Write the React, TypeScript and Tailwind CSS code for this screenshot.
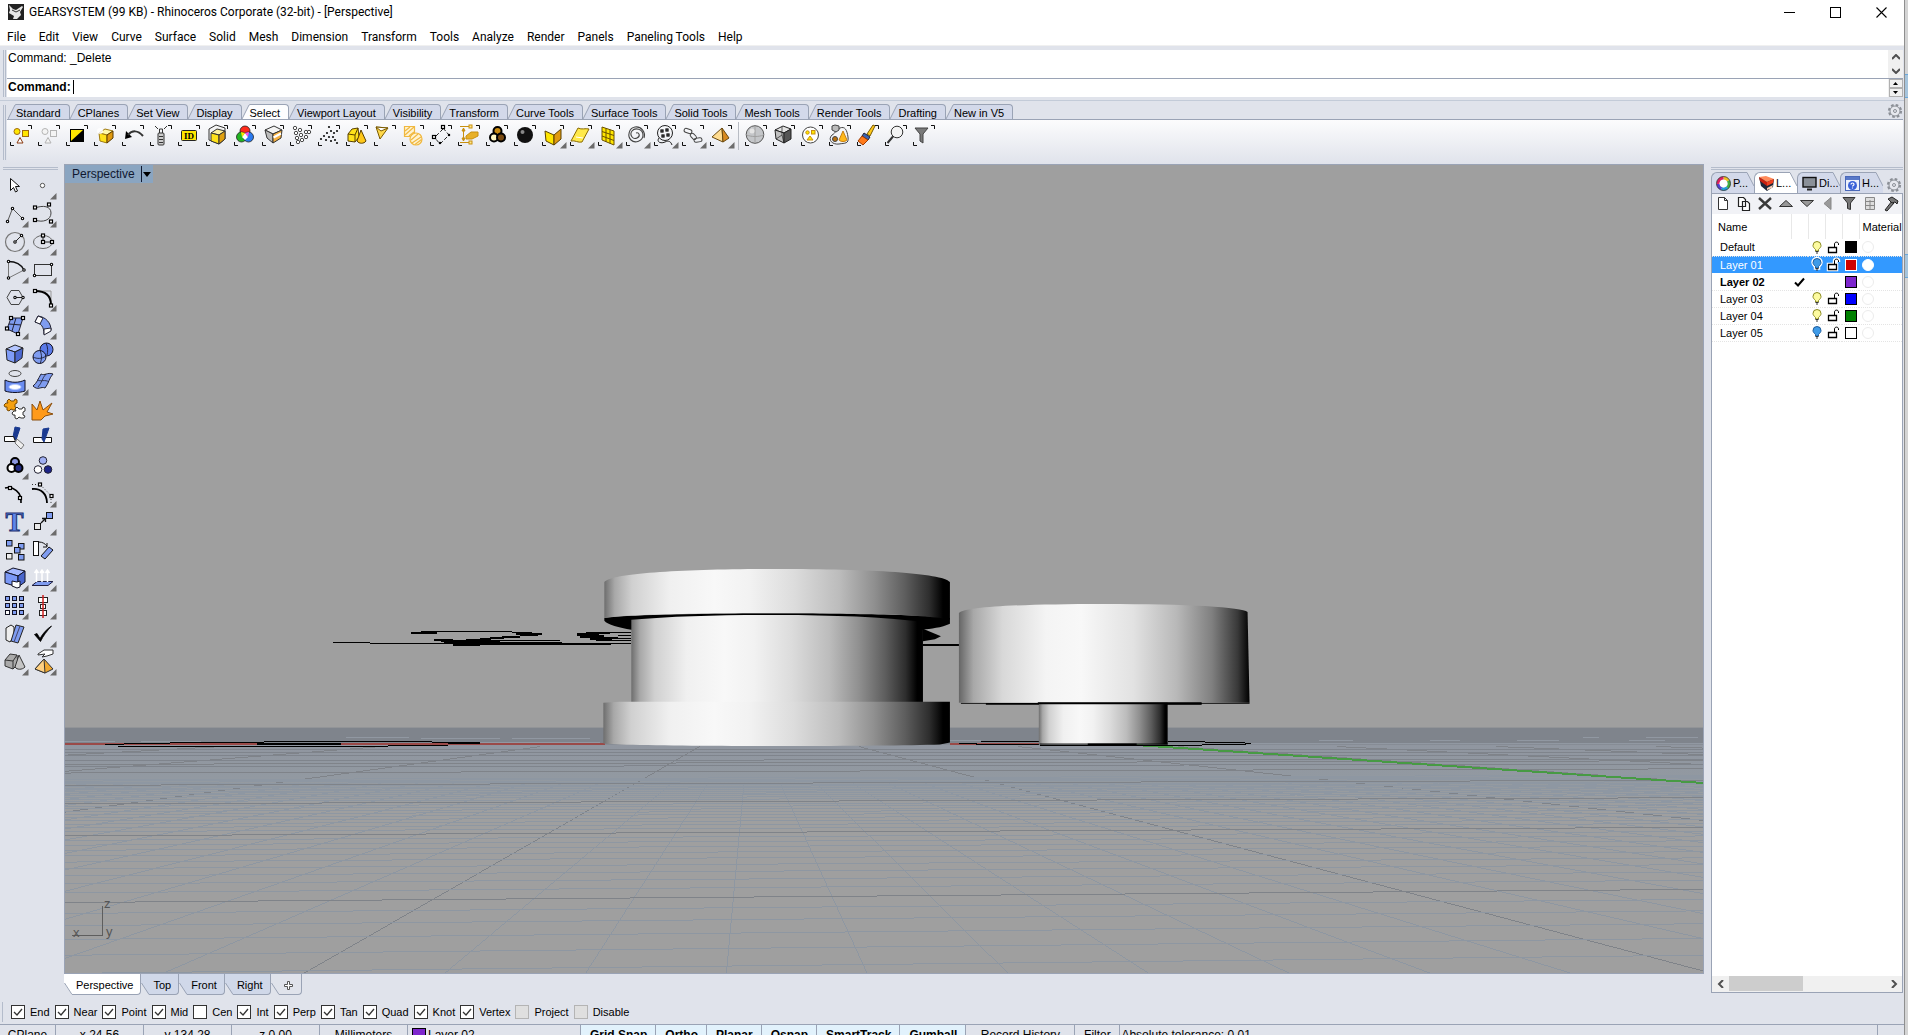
import { Fragment, useState, type ReactNode } from "react";

/* ---------- shared bits ---------- */

const SANS = "font-['Liberation_Sans',Arial,sans-serif]";
const UI = "font-[Roboto,'Noto_Sans',sans-serif]";

function Handle({ x, y, s = 3 }: { x: number; y: number; s?: number }) {
  return <rect x={x - s / 2} y={y - s / 2} width={s} height={s} fill="#fff" stroke="#000" strokeWidth="1.2" />;
}

function Dot({ x, y }: { x: number; y: number }) {
  return <circle cx={x} cy={y} r="1.2" fill="#fff" stroke="#000" strokeWidth="1.1" />;
}

interface CubeProps {
  top: string;
  left: string;
  right: string;
}

function Cube({ top, left, right }: CubeProps) {
  return (
    <g stroke="#222" strokeWidth="1" strokeLinejoin="round">
      <path d="M5 9l9-4 8 3-8 4z" fill={top} />
      <path d="M5 9l9 3v11l-8-3z" fill={left} />
      <path d="M14 12l8-4-1 10-7 5z" fill={right} />
    </g>
  );
}

/* ---------- select toolbar ---------- */

interface Tool {
  name: string;
  art: ReactNode;
  flyout?: boolean;
}

const selectTools: Tool[] = [
  {
    name: "Select all",
    art: (
      <g stroke="#a06a10" strokeWidth="1">
        <circle cx="9" cy="9.5" r="3" fill="#ffe600" />
        <rect x="14.500" y="8.500" width="6" height="6" fill="#ffe600" />
        <path d="M12 15.500l3 5.500H9z" fill="#fff" stroke="#8a3a10" />
      </g>
    ),
  },
  {
    name: "Select none",
    art: (
      <g stroke="#b4b4b4" strokeWidth="1" fill="#f4f4f4">
        <circle cx="9" cy="9.500" r="3" />
        <rect x="14.500" y="8.500" width="6" height="6" />
        <path d="M12 15.500l3 5.500H9z" />
      </g>
    ),
  },
  {
    name: "Invert selection",
    art: (
      <g>
        <rect x="6" y="7" width="14" height="13" fill="#000" />
        <path d="M7 8h12L7 19z" fill="#ffe600" />
      </g>
    ),
  },
  {
    name: "Select last created",
    art: (
      <g stroke="#a07a10" strokeWidth="1" strokeLinejoin="round">
        <path d="M7 11l6-4 8 2-6 4z" fill="#fff9a8" />
        <path d="M7 11l8 2v8l-7-2z" fill="#ffe21a" />
        <path d="M15 13l6-4v7l-6 5z" fill="#e09a10" stroke="#5a3a00" />
        <circle cx="8" cy="9" r="3" fill="#fff" stroke="none" opacity=".8" />
      </g>
    ),
  },
  {
    name: "Select previous",
    art: (
      <g>
        <path d="M5 17l1-8 6 6z" fill="#000" />
        <path d="M8 13c4-5 10-5 15 1" fill="none" stroke="#333" strokeWidth="2" />
      </g>
    ),
  },
  {
    name: "Select dup",
    art: (
      <g stroke="#333" fill="none">
        <rect x="10" y="11" width="6" height="12" fill="#ccc" rx="1" />
        <path d="M11.500 11V7h3v4M7 4l3 3M19 4l-3 3M11 14.500h4M11 17.500h4M11 20.500h4" />
      </g>
    ),
  },
  {
    name: "Select by ID",
    art: (
      <g>
        <rect x="5.500" y="8.500" width="15" height="10" fill="#ffe600" stroke="#222" rx="1" />
        <text x="13" y="17" textAnchor="middle" fontSize="9" fontWeight="bold" fontFamily="Liberation Serif, serif">
          ID
        </text>
      </g>
    ),
  },
  {
    name: "Select by layer",
    art: (
      <g stroke="#333" strokeLinejoin="round">
        <path d="M5 7l7-4 9 3v11l-6 5-10-4z" fill="#f4f4f4" />
        <path d="M7 11l6-4 8 2-6 4z" fill="#fff29a" />
        <path d="M7 11l8 2v9l-8-3z" fill="#ffe21a" />
        <path d="M15 13l6-4v8l-6 5z" fill="#e0a010" />
      </g>
    ),
  },
  {
    name: "Select by color",
    art: (
      <g stroke="#222" strokeWidth=".8">
        <circle cx="13" cy="9" r="5" fill="#ff2a1a" />
        <circle cx="9.500" cy="15" r="5" fill="#22b422" />
        <circle cx="16.500" cy="15" r="5" fill="#2a7af0" />
        <path d="M13 11l3 4-3 3-3-3z" fill="#fff" stroke="none" />
        <path d="M13 11l-4-1 1 5z" fill="#ffe600" stroke="none" />
        <path d="M13 11l4-1-1 5z" fill="#ff50e0" stroke="none" />
      </g>
    ),
  },
  {
    name: "Select by material",
    art: (
      <g stroke="#333" strokeLinejoin="round">
        <path d="M5 8l9-4 8 4-9 4z" fill="#f4f4f4" />
        <path d="M5 8l8 4v9l-6-5z" fill="#bbb" />
        <path d="M13 12l9-4-1 8-8 5z" fill="#f5b040" />
        <path d="M13.500 15.500l7.500-4" stroke="#fff" strokeWidth="2" />
      </g>
    ),
  },
  {
    name: "Select point clouds",
    art: (
      <g stroke="#333" strokeWidth=".9" fill="#fff">
        {[[7, 6], [12, 8], [8, 11], [13, 13], [18, 10], [9, 16], [14, 18], [18, 15], [10, 20], [21, 10]].map(([x, y]) => (
          <circle key={`${x}-${y}`} cx={x} cy={y} r="1.700" />
        ))}
      </g>
    ),
  },
  {
    name: "Select points",
    art: (
      <g fill="#111">
        {[[13, 5], [15, 9], [11, 11], [18, 11], [21, 9], [8, 14], [13, 15], [17, 15], [5, 17], [10, 18], [15, 19], [19, 18], [21, 21]].map(
          ([x, y]) => (
            <circle key={`${x}-${y}`} cx={x} cy={y} r="1.100" />
          )
        )}
      </g>
    ),
  },
  {
    name: "Select polysurfaces",
    art: (
      <g stroke="#5a4000" strokeLinejoin="round">
        <path d="M4 12l4-5 6-1 1 9-4 5-7-1z" fill="#ffe21a" />
        <path d="M4 12l7 1v7M11 13l3-7" fill="none" />
        <path d="M17 8l5 11c-2 3-7 3-9 0z" fill="#ffc81a" />
      </g>
    ),
  },
  {
    name: "Select surfaces",
    art: (
      <g stroke="#7a5a00" strokeLinejoin="round">
        <path d="M4 5l12 1-8 11z" fill="#ffd84a" />
        <path d="M4 5l12 1-7 3z" fill="#fff" />
      </g>
    ),
  },
  {
    name: "Select hatches",
    art: (
      <g stroke="#f0b840" strokeWidth="1.200" fill="none">
        <path d="M4.500 4.500h10v8l-3 2h-7z" fill="#fff3d0" />
        <circle cx="16" cy="17" r="6" fill="#fff3d0" />
        <path d="M5 9l5-4M5 13l9-8M9 14l5-4M11 18l7-6M12 21l9-6M15 22.500l6.500-5" />
      </g>
    ),
  },
  {
    name: "Select curves",
    art: (
      <g stroke="#222" fill="none">
        <path d="M8 14l8-8M15 6l6 7-9 9-5-6" strokeDasharray="4 2" />
        <Handle x={15} y={5} />
        <Handle x={6} y={15} />
        <Handle x={21} y={13} s={1} />
        <Handle x={12} y={21} s={1} />
      </g>
    ),
  },
  {
    name: "Select dimensions",
    art: (
      <g stroke="#c89010" fill="#ffe88a">
        <path d="M4 4.500h11M4 20.500h11M7.500 6v13" fill="none" />
        <path d="M7.500 6l-1.500 3h3zM7.500 19l-1.500-3h3z" fill="#c89010" />
        <path d="M10 14l5-4h7v4l-6 3h-6z" fill="#e8b028" />
        <rect x="13" y="3" width="3" height="3" />
        <rect x="13" y="19" width="3" height="3" />
      </g>
    ),
  },
  {
    name: "Select groups",
    art: (
      <g stroke="#000" strokeWidth="2">
        <circle cx="13.500" cy="9" r="4" fill="#c88a10" />
        <circle cx="10" cy="15.500" r="4" fill="#fff6c0" />
        <circle cx="17" cy="15.500" r="4" fill="#7a4a10" />
      </g>
    ),
  },
  {
    name: "Select block instances",
    art: (
      <g>
        <circle cx="13" cy="13" r="8" fill="#111" />
        <circle cx="10.500" cy="10" r="2" fill="#888" />
      </g>
    ),
  },
  {
    name: "Select open polysurfaces",
    flyout: true,
    art: (
      <g stroke="#5a4000" strokeLinejoin="round">
        <path d="M5 9l9 4v10l-8-4z" fill="#ffe600" />
        <path d="M14 13l7-6v10l-7 6z" fill="#e09a10" />
      </g>
    ),
  },
  {
    name: "Select planar",
    flyout: true,
    art: (
      <g stroke="#8a6a00" strokeLinejoin="round">
        <path d="M3 19l7-13c4 2 7 0 11 1l-7 13c-4 1-7-2-11-1z" fill="#ffe94a" />
        <path d="M8 15l7 1" stroke="#fff" />
      </g>
    ),
  },
  {
    name: "Select meshes",
    flyout: true,
    art: (
      <g stroke="#6a5000" strokeLinejoin="round">
        <path d="M6 5l12 4v14L6 18z" fill="#ffe600" />
        <path d="M10 6v14M14 7.500v14M6 9.500l12 4M6 14l12 4.500" fill="none" />
      </g>
    ),
  },
  {
    name: "Select chain",
    flyout: true,
    art: (
      <path
        d="M20 16c2-6-3-12-9-11s-8 9-4 13 12 1 12-5-8-8-11-4 1 9 5 7 2-6-1-5"
        fill="none"
        stroke="#444"
        strokeWidth="1.100"
      />
    ),
  },
  {
    name: "Select lasso",
    flyout: true,
    art: (
      <g stroke="#222" fill="none">
        <circle cx="13" cy="11" r="7.500" />
        <path d="M7 16c-3 4 2 6 6 4s6 0 7 3" />
        <Handle x={10} y={9} s={2} />
        <Handle x={15} y={8} s={2} />
        <Handle x={11} y={14} s={2} />
        <Handle x={16} y={13} s={2} />
      </g>
    ),
  },
  {
    name: "Select linked",
    flyout: true,
    art: (
      <g stroke="#444" fill="none">
        <rect x="4" y="7" width="8" height="4" rx="2" transform="rotate(20 8 9)" />
        <rect x="10" y="12" width="7" height="4" rx="2" transform="rotate(45 13 14)" />
        <rect x="14" y="16" width="8" height="4" rx="2" transform="rotate(-10 18 18)" />
      </g>
    ),
  },
  {
    name: "Select by boundary",
    flyout: true,
    art: (
      <g stroke="#6a4a10" strokeLinejoin="round">
        <path d="M4 15l10-9 1 14z" fill="#ffdc90" />
        <path d="M14 6l7 10-6 4z" fill="#d88a20" />
      </g>
    ),
  },
];

const filterTools: Tool[] = [
  {
    name: "Select spheres",
    art: (
      <g stroke="#555" fill="none">
        <circle cx="12" cy="12.500" r="8.800" fill="#c4c6c9" />
        <path d="M12 4v17M3.500 13c5 2 12 2 17 0" stroke="#a0a0a0" />
        <circle cx="9" cy="9" r="2.500" fill="#e4e4e4" stroke="none" />
      </g>
    ),
  },
  {
    name: "Select boxes",
    art: (
      <g stroke="#222" strokeLinejoin="round">
        <path d="M4 8l8-4 8 3-7 4z" fill="#e4e4e4" />
        <path d="M4 8l9 3v10l-8-4z" fill="#c0c0c0" />
        <path d="M13 11l7-4v10l-7 4z" fill="#555" />
        <path d="M5 17l6-4 2 8M11 5v8" fill="none" strokeWidth=".7" />
      </g>
    ),
  },
  {
    name: "Select by value",
    art: (
      <g stroke="#c89010" fill="#ffe600">
        <circle cx="11.500" cy="13" r="8" fill="#fff" stroke="#444" />
        <circle cx="8.500" cy="10.500" r="1.700" />
        <rect x="12.500" y="8.500" width="3.500" height="3.500" />
        <path d="M11 14l3 4H8z" />
      </g>
    ),
  },
  {
    name: "Select similar",
    art: (
      <g stroke="#444" fill="none">
        <path d="M5 13c-5 5 1 10 7 9s10 0 9-7-3-11-8-9-4 5-8 7z" />
        <path d="M5 4l3-1 4 1v4l-3 2-4-2z" fill="#bbb" />
        <circle cx="8" cy="17" r="2.500" fill="#b87010" />
        <path d="M16 9l4 9c-2 2-6 2-8 0z" fill="#ffb81a" stroke="#c88010" />
      </g>
    ),
  },
  {
    name: "Selection brush",
    art: (
      <g strokeLinejoin="round">
        <path d="M12 12l6-9 2 1-5 10z" fill="#ffc81a" stroke="#7a5a00" />
        <path d="M9 11l6 4-2 3-6-4z" fill="#3a62b0" stroke="#223" />
        <path d="M7 14l6 4-5 5-5-4z" fill="#ff7a1a" stroke="#a03a00" />
      </g>
    ),
  },
  {
    name: "Zoom selected",
    art: (
      <g stroke="#333">
        <circle cx="14" cy="10" r="5.800" fill="#f4f4f4" />
        <path d="M10 14.500L4.500 21" strokeWidth="2" />
      </g>
    ),
  },
  {
    name: "Selection filter",
    art: <path d="M4 6h13l-5 6v9l-3-2v-7z" fill="#7a7a7a" stroke="#444" />,
  },
];

function SelectTool({ tool }: { tool: Tool }) {
  return (
    <button type="button" aria-label={tool.name} className="h-7 w-7 shrink-0">
      <svg viewBox="0 0 28 28" className="h-7 w-7">
        {tool.art}
        <path d="M2.500 20v3.500H6M20 3.500h3.500V7" fill="none" stroke="#111" />
        {tool.flyout && <path d="M20 26.500h6.500V20z" fill="#6c6c6c" />}
      </svg>
    </button>
  );
}

/* ---------- left tools ---------- */

const BLUE = "#7f9cf0";

const sideTools: Tool[] = [
  {
    name: "Select",
    flyout: false,
    art: <path d="M9.500 6.500v12l3-3 2 4.500 2-1-2-4.500h4z" fill="#fff" stroke="#111" strokeLinejoin="round" />,
  },
  { name: "Point", flyout: true, art: <circle cx="13.500" cy="13.500" r="2.200" fill="#fff" stroke="#555" /> },
  {
    name: "Polyline",
    flyout: true,
    art: (
      <g>
        <path d="M6.500 21.500l5-13 10 10" fill="none" stroke="#555" />
        <Dot x={6.5} y={21.5} />
        <Dot x={11.5} y={8.5} />
        <Dot x={21.5} y={18.5} />
      </g>
    ),
  },
  {
    name: "Curve",
    flyout: true,
    art: (
      <g>
        <path d="M6 8c8-3 16-2 16 5s-8 10-16 7" fill="none" stroke="#444" />
        <Handle x={6} y={7.5} />
        <Handle x={20} y={4.5} />
        <Handle x={6} y={20} />
        <Handle x={22} y={21.5} />
      </g>
    ),
  },
  {
    name: "Circle",
    flyout: true,
    art: (
      <g>
        <circle cx="14" cy="14" r="9.500" fill="none" stroke="#777" strokeWidth="1.200" />
        <path d="M14 14l6-6" stroke="#222" />
        <Dot x={14} y={14} />
        <Dot x={20.5} y={7.5} />
      </g>
    ),
  },
  {
    name: "Ellipse",
    flyout: true,
    art: (
      <g>
        <ellipse cx="14" cy="14" rx="9.500" ry="6.500" fill="none" stroke="#666" />
        <path d="M14 8v6h9" fill="none" stroke="#222" />
        <Handle x={14} y={7.5} />
        <Handle x={14} y={14} />
        <Handle x={23} y={14} />
      </g>
    ),
  },
  {
    name: "Arc",
    flyout: true,
    art: (
      <g>
        <path d="M7.500 22V5.500M7.500 22L23 14" stroke="#777" />
        <path d="M7.500 5.500C14 5.500 20 8 23 14" fill="none" stroke="#111" strokeWidth="1.300" />
        <Dot x={7.5} y={5.5} />
        <Dot x={23} y={14} />
        <Dot x={7.5} y={22} />
      </g>
    ),
  },
  {
    name: "Rectangle",
    flyout: true,
    art: (
      <g>
        <rect x="5.500" y="8.500" width="17" height="11" fill="none" stroke="#333" />
        <Dot x={22.5} y={8.5} />
        <Dot x={5.5} y={19.5} />
      </g>
    ),
  },
  {
    name: "Polygon",
    flyout: true,
    art: (
      <g>
        <path d="M10 6.500h8l4 7-4 7h-8l-4-7z" fill="none" stroke="#444" />
        <path d="M14 13.500h8" stroke="#222" />
        <Dot x={14} y={13.5} />
        <Dot x={22} y={13.5} />
      </g>
    ),
  },
  {
    name: "Fillet",
    flyout: true,
    art: (
      <g>
        <path d="M6 7h16v15" fill="none" stroke="#999" />
        <path d="M6 7c10 0 16 4 16 14" fill="none" stroke="#000" strokeWidth="2" />
        <Handle x={6} y={7} />
        <Handle x={22} y={21.5} />
      </g>
    ),
  },
  {
    name: "Surface from corners",
    flyout: true,
    art: (
      <g>
        <path d="M10 6h12l-5 16-11-5z" fill={BLUE} stroke="#223" />
        <path d="M15 6l-4 13M8 12l12 1" stroke="#223" fill="none" />
        <Handle x={10} y={6} />
        <Handle x={22} y={6} />
        <Handle x={6} y={16.5} />
        <Handle x={17} y={22} />
      </g>
    ),
  },
  {
    name: "Sweep",
    flyout: true,
    art: (
      <g stroke="#223" strokeLinejoin="round">
        <path d="M9 4c8 1 13 7 13 14l-7 4c0-7-3-11-9-12z" fill={BLUE} />
        <path d="M9 4l5 2-3 6-5-2zM15 17l7-1v3l-7 4z" fill="#fff" />
      </g>
    ),
  },
  { name: "Box", flyout: true, art: <Cube top="#b4c6ff" left="#7f9cf8" right="#4c68d0" /> },
  {
    name: "Sphere",
    flyout: true,
    art: (
      <g stroke="#112">
        <circle cx="17.500" cy="9.500" r="6.500" fill="#5a7ae8" />
        <circle cx="10.500" cy="17" r="6.500" fill={BLUE} />
        <path d="M4 17c4 2 9 2 13-1M11 10.500c2 4 2 9 0 13M17 3c2 4 2 9 1 12" fill="none" strokeWidth=".8" />
      </g>
    ),
  },
  {
    name: "Boundary",
    flyout: true,
    art: (
      <g stroke="#112">
        <ellipse cx="14" cy="5.500" rx="6" ry="3" fill="none" stroke="#444" />
        <path d="M4 12c6 3 14 3 20 0v11c-6 2-14 2-20 0z" fill="#6a8cf0" />
        <ellipse cx="14" cy="19" rx="6" ry="2.500" fill="#fff" stroke="#b8ccff" />
      </g>
    ),
  },
  {
    name: "Patch",
    flyout: true,
    art: (
      <g stroke="#223" strokeLinejoin="round" fill="none">
        <path d="M4 18c4-3 5-7 8-12 4 2 6-2 12 0-4 4-4 9-8 14-4-2-7 3-12-2z" fill={BLUE} />
        <path d="M8 12c4 2 8-1 12 2M17 6c-4 4-4 9-8 13" strokeWidth=".8" />
      </g>
    ),
  },
  {
    name: "Explode plugin",
    art: (
      <g strokeLinejoin="round">
        <path
          d="M6 5l2-2 2 2h3l1-2 2 1v3l-2 1v3l2 1-1 2h-3l-2-1-2 2-2-1v-3H4l-1-2 2-2h2z"
          fill="#f4a010"
          stroke="#7a4a00"
        />
        <path
          d="M14 13l2-2 2 2h3l1-2 2 1v3l-2 1v3l2 1-1 2h-3l-2-1-2 2-2-1v-3h-2l-1-2 2-2h2z"
          fill="#fff"
          stroke="#333"
        />
      </g>
    ),
  },
  {
    name: "Explode",
    art: <path d="M3 24V8l5 6 3-9 3 9 9-7-5 9 6 2-8 2-4 4z" fill="#ff9a1a" stroke="#8a5010" />,
  },
  {
    name: "Trim",
    art: (
      <g stroke="#111">
        <path d="M14 3l5 1-4 12-3-3z" fill="#1a3a90" stroke="#1a3a90" />
        <path d="M3.500 12.500h9l2 5h-11z" fill="#fff" />
        <path d="M16 15l7 6-3 4-6-6z" fill="#eee" stroke="#777" />
      </g>
    ),
  },
  {
    name: "Split",
    art: (
      <g stroke="#111">
        <path d="M4.500 13.500h18v5h-18z" fill="#fff" />
        <path d="M14 5l6-1-5 14-2-3z" fill="#1a3a90" stroke="#1a3a90" />
      </g>
    ),
  },
  {
    name: "Group",
    flyout: true,
    art: (
      <g stroke="#000" strokeWidth="2">
        <circle cx="14" cy="10" r="4" fill="#8a96e0" />
        <circle cx="10.500" cy="16" r="4" fill="#fff" />
        <circle cx="17.500" cy="16" r="4" fill="#222a80" />
      </g>
    ),
  },
  {
    name: "Ungroup",
    art: (
      <g stroke="#223">
        <circle cx="14" cy="8.500" r="3.800" fill="#a0b0f4" />
        <circle cx="9" cy="17.500" r="3.800" fill="#fff" />
        <circle cx="19" cy="17.500" r="3.800" fill="#1c2488" />
      </g>
    ),
  },
  {
    name: "Control points",
    art: (
      <g>
        <path d="M4 8c8-2 17 4 16 15" fill="none" stroke="#000" strokeWidth="1.600" />
        <Handle x={9} y={8} />
        <Handle x={19} y={18} />
      </g>
    ),
  },
  {
    name: "Edit points",
    flyout: true,
    art: (
      <g>
        <path d="M3 9c9-1 15 5 15 14" fill="none" stroke="#000" strokeWidth="1.800" />
        <path d="M3 4.500h8l11 11v8" fill="none" stroke="#333" strokeDasharray="1 2" />
        <Handle x={11} y={4.5} />
        <Handle x={22.5} y={16} />
      </g>
    ),
  },
  {
    name: "Text",
    flyout: true,
    art: (
      <text
        x="13.500"
        y="23"
        textAnchor="middle"
        fontSize="27"
        fontWeight="bold"
        fontFamily="Liberation Serif, serif"
        fill="#5f86ea"
        stroke="#1c3070"
        strokeWidth="1"
      >
        T
      </text>
    ),
  },
  {
    name: "Move",
    flyout: true,
    art: (
      <g stroke="#111">
        <rect x="5.500" y="15.500" width="6" height="6" fill="#e8e8e8" />
        <rect x="17.500" y="4.500" width="6" height="6" fill={BLUE} />
        <path d="M12 15l4-4M13 10.500h3.500V14" fill="none" strokeWidth="1.300" />
      </g>
    ),
  },
  {
    name: "Copy",
    art: (
      <g stroke="#111">
        <rect x="5.500" y="4.500" width="5.500" height="5.500" fill={BLUE} />
        <rect x="17.500" y="7.500" width="5.500" height="5.500" fill={BLUE} />
        <rect x="13.500" y="11.500" width="5.500" height="5.500" fill={BLUE} />
        <rect x="5.500" y="17.500" width="5.500" height="5.500" fill="#eee" />
        <rect x="17.500" y="18.500" width="5.500" height="5.500" fill={BLUE} />
      </g>
    ),
  },
  {
    name: "Rotate",
    art: (
      <g stroke="#111">
        <rect x="4.500" y="5.500" width="5" height="14" fill="#fff" />
        <path d="M12 20l8-9 4 3-8 9z" fill={BLUE} />
        <path d="M10 6c4 0 6 2 8 4M18 7v4h-4" fill="none" />
      </g>
    ),
  },
  {
    name: "Boolean",
    flyout: true,
    art: (
      <g stroke="#112" strokeLinejoin="round">
        <path d="M4 8l8-4 12 3-7 5z" fill="#a4b8ff" />
        <path d="M4 8l13 4v11L4 19z" fill="#7a98f6" />
        <path d="M17 12l7-5v11l-7 5z" fill="#4a66cc" />
        <path d="M11 17l5 1 3-1v6l-3 1-5-2z" fill="#fff" />
      </g>
    ),
  },
  {
    name: "Extrude",
    flyout: true,
    art: (
      <g>
        <path d="M3 21.500l5-4h16l-5 4z" fill={BLUE} stroke="#224" />
        <path
          d="M7.500 18V7M13 18V7M18.500 18V7M5.500 9l2-3 2 3M11 9l2-3 2 3M16.500 9l2-3 2 3"
          stroke="#fff"
          strokeWidth="1.500"
          fill="none"
        />
      </g>
    ),
  },
  {
    name: "Array",
    flyout: true,
    art: (
      <g stroke="#112" fill={BLUE}>
        {[0, 1, 2].map((r) => (
          <Fragment key={r}>
            <rect x="4.500" y={4.5 + r * 7} width="4" height="4" fill={r === 2 ? "#fff" : BLUE} />
            <rect x="11.500" y={4.5 + r * 7} width="4" height="4" />
            <rect x="18.500" y={4.5 + r * 7} width="4" height="4" />
          </Fragment>
        ))}
      </g>
    ),
  },
  {
    name: "Align",
    flyout: true,
    art: (
      <g stroke="#222" fill="#fff">
        <rect x="9.500" y="5.500" width="9" height="5" />
        <rect x="11.500" y="12.500" width="5" height="4" />
        <rect x="10.500" y="18.500" width="7" height="5" />
        <path d="M14 3v23" stroke="#d02020" strokeWidth="1.500" />
      </g>
    ),
  },
  {
    name: "Analyze direction",
    flyout: true,
    art: (
      <g stroke="#222" strokeLinejoin="round">
        <path d="M5 8l5-3 3 2v10l-4 5-4-2z" fill="#eee" />
        <path d="M15 5l8 2-6 16-7-2z" fill={BLUE} />
        <path d="M19 6l-6 16" stroke="#446" />
      </g>
    ),
  },
  {
    name: "Check",
    flyout: true,
    art: <path d="M5.500 14.500l2.500-1 3 5C14 13 18 9 22.500 6 18 11 14 16 11.500 21.500z" fill="#000" stroke="#000" strokeWidth=".8" />,
  },
  {
    name: "Meshes",
    flyout: true,
    art: (
      <g stroke="#333" strokeLinejoin="round">
        <path d="M4 12l5-6 7 1 1 9-5 5-8-3z" fill="#aaa" />
        <path d="M4 12l8 1v8M12 13l4-6" fill="none" />
        <path d="M18 7l6 12c-3 3-8 3-10 0z" fill="#c4c4c4" />
      </g>
    ),
  },
  {
    name: "Properties",
    flyout: true,
    art: (
      <g stroke="#333" strokeLinejoin="round">
        <path d="M6 21l9-10 9 10-8 4z" fill="#f0a830" />
        <path d="M6 21l9-10 1 14z" fill="#ffd080" />
        <path d="M9 6l6-4h9v4l-6 2-5 1 3-3-7 1z" fill="#fff" />
      </g>
    ),
  },
];

function SideToolbar() {
  return (
    <aside className="w-16 shrink-0 pt-[3px]">
      <div className="mr-1.5 ml-[3px] h-[3px] border-y border-[#b4bccb]" />
      <div className="mt-0.5 ml-px grid w-14 grid-cols-2">
        {sideTools.map((tool) => (
          <button key={tool.name} type="button" aria-label={tool.name} className="h-7 w-7">
            <svg viewBox="0 0 28 28" className="h-7 w-7">
              {tool.art}
              {tool.flyout && <path d="M21 27.500h6.500V21z" fill="#6c6c6c" />}
            </svg>
          </button>
        ))}
      </div>
    </aside>
  );
}

/* ---------- viewport ---------- */

// ground plane: parallel lines meet near (750, 718)
const VX = 750;
const VY = 718;

function GroundGrid() {
  const across: ReactNode[] = [];
  for (let i = -6; i <= 52; i++) {
    const major = i % 10 === 0;
    const d = 1 / (0.00528 + 0.000288 * i);
    if (!major && i > 34) continue;
    across.push(
      <line key={i} x1="64" x2="1704" y1={714 + d} y2={714 + d * 0.93} stroke={major ? "#7f8389" : "#8e97a2"} />
    );
  }
  const along: ReactNode[] = [];
  for (let i = -110; i <= 110; i++) {
    const major = i % 10 === 0;
    const slope = 3.757 + 0.55 * i;
    const top = major ? 747 : 784;
    along.push(
      <line
        key={i}
        x1={VX + slope * (top - VY)}
        y1={top}
        x2={VX + slope * (974 - VY)}
        y2="974"
        stroke={major ? "#7f8389" : "#8e97a2"}
      />
    );
  }
  return (
    <g shapeRendering="crispEdges">
      {along}
      {across}
    </g>
  );
}

function Scene() {
  return (
    <svg viewBox="64 164 1640 810" preserveAspectRatio="none" className="block h-full w-full">
      <defs>
        <linearGradient id="ground" x1="0" y1="745" x2="0" y2="830" gradientUnits="userSpaceOnUse">
          <stop offset="0" stopColor="#9096a0" />
          <stop offset=".4" stopColor="#9299a1" />
          <stop offset=".6" stopColor="#9a9da0" />
          <stop offset=".8" stopColor="#9f9f9f" />
        </linearGradient>
        <linearGradient id="drum">
          <stop offset="0" stopColor="#6e6e6e" />
          <stop offset=".03" stopColor="#a8a8a8" />
          <stop offset=".08" stopColor="#d0d0d0" />
          <stop offset=".19" stopColor="#f0f0f0" />
          <stop offset=".32" stopColor="#f8f8f8" />
          <stop offset=".42" stopColor="#f2f2f2" />
          <stop offset=".55" stopColor="#dcdcdc" />
          <stop offset=".68" stopColor="#bcbcbc" />
          <stop offset=".78" stopColor="#909090" />
          <stop offset=".87" stopColor="#5e5e5e" />
          <stop offset=".94" stopColor="#2e2e2e" />
          <stop offset=".98" stopColor="#000" />
        </linearGradient>
        <linearGradient id="cap">
          <stop offset="0" stopColor="#666" />
          <stop offset=".05" stopColor="#a8a8a8" />
          <stop offset=".15" stopColor="#d8d8d8" />
          <stop offset=".3" stopColor="#f4f4f4" />
          <stop offset=".42" stopColor="#f8f8f8" />
          <stop offset=".6" stopColor="#e2e2e2" />
          <stop offset=".75" stopColor="#b8b8b8" />
          <stop offset=".87" stopColor="#808080" />
          <stop offset=".96" stopColor="#383838" />
          <stop offset="1" stopColor="#000" />
        </linearGradient>
      </defs>

      <rect x="64" y="164" width="1640" height="810" fill="#9f9f9f" />
      <rect x="64" y="728" width="1640" height="18" fill="#7f848c" />
      <rect x="64" y="745" width="1640" height="85" fill="url(#ground)" />
      <GroundGrid />
      <g stroke="#9198a2" shapeRendering="crispEdges">
        <path d="M345 737.500h63M420 738.500h80M512 738.500h78M1584 737.500h16M1647 737.500h52M1320 740.500h34M1431 740.500h30M1518 740.500h42M1630 740.500h36" />
        <path d="M64 741.500h50M140 741.500h60M470 742.500h130M1250 743.500h454M950 740.500h31" />
      </g>
      <g stroke="#7f848c" shapeRendering="crispEdges">
        <path d="M64 749.500h1640M64 752.500h1640M64 755.500h1640M64 760.500h700M764 759.500h940M64 766.500h560M624 765.500h560M1184 764.500h520" />
      </g>

      {/* axes */}
      <path d="M64 744h541M950 744h89" stroke="#9a4a48" strokeWidth="2" shapeRendering="crispEdges" />
      <path d="M1137 745.500L1704 783.500" stroke="#479a44" strokeWidth="2" shapeRendering="crispEdges" />

      {/* flat curves on the construction plane */}
      <g fill="none" stroke="#000" shapeRendering="crispEdges">
        <path d="M104 744.500h19M123 743.500h46M169 742.500h94M263 741.500h168M431 742.500h49M447 743.500h33M387 745.500h60M117 746.500h270" />
        <path d="M256 744h84" strokeWidth="2" />
        <path d="M981 741.500h58M959 743.500h18M976 744.500h63M1168 741.500h37M1205 742.500h40M1202 744.500h44M1245 743.500h6M1040 745.500h162" />
      </g>

      {/* curves floating behind the gears */}
      <g stroke="#000" fill="none" shapeRendering="crispEdges">
        <path d="M332 642.500h37M369 643.500h262" />
        <path d="M923 645h36M410 633h26M516 634h26M502 637h18M452 640h-19" strokeWidth="2" />
        <path d="M420 631.500h92M512 632.500h20M532 633.500h9M520 635.500h18M490 637.500h25M480 638.500h24M465 639.500h26M433 640.500h127M440 641.500h60M443 642.500h119M452 645.500h28" />
        <path d="M452 644h159" strokeWidth="2" />
        <path d="M577 635h22M580 637h24M590 639h22" strokeWidth="3" />
        <path d="M586 632.500h45M580 633.500h30M618 635.500h13M608 637.500h10M596 640.500h35M611 638.500h20" />
      </g>
      <path d="M923 629l12 5 6 2.500-6 3-12 2z" fill="#000" />

      {/* first gear */}
      <path d="M604 618c40-6 306-6 346 0v6c-8 4-20 5-27 6H631c-12-2-24-5-27-9z" fill="#000" />
      <path d="M604 582c8-9 80-13 173-13s165 4 173 13v38c-14-5-90-7-173-7s-160 2-173 5z" fill="url(#drum)" />
      <path d="M631 620c40-4 90-5 146-5s106 2 146 7v81H631z" fill="url(#drum)" />
      <path d="M603 703l16-1h331v41l-10 2c-60 2-250 2-320 0l-17-1z" fill="url(#drum)" />

      {/* second gear */}
      <path d="M961 703h289v1h-48v1H986v-1h-25z" fill="#000" />
      <path d="M959 613c6-6 60-9 145-9s138 3 144 8l2 91H959z" fill="url(#cap)" />
      <path d="M1039 703h129v42h-129z" fill="url(#drum)" />
      <path d="M1038 703.500h164M1088 745h49" stroke="#000" strokeWidth="2" />
      <path d="M1040 744.500h128" stroke="#000" />

      {/* world axes icon */}
      <path d="M101.500 907v30M71 936.500h30" stroke="#5e5e5e" shapeRendering="crispEdges" />
      <g fill="#555" fontFamily="Liberation Sans, sans-serif" fontSize="13">
        <text x="103" y="909">z</text>
        <text x="72" y="938">x</text>
        <text x="105" y="937">y</text>
      </g>
    </svg>
  );
}

/* ---------- tabs ---------- */

const toolTabs = [
  "Standard",
  "CPlanes",
  "Set View",
  "Display",
  "Select",
  "Viewport Layout",
  "Visibility",
  "Transform",
  "Curve Tools",
  "Surface Tools",
  "Solid Tools",
  "Mesh Tools",
  "Render Tools",
  "Drafting",
  "New in V5",
];

function ToolTab({ label, active, onClick }: { label: string; active: boolean; onClick: () => void }) {
  return (
    <button type="button" onClick={onClick} className="flex h-[15px] items-stretch">
      <svg viewBox="0 0 8 15" className="h-[15px] w-2 shrink-0">
        <path d="M0 15L7 1l1-1v15z" fill={active ? "#fdfdfe" : "#d3d9ea"} />
        <path d="M0 15L7 1l1-.500" fill="none" stroke="#9aa3b5" />
      </svg>
      <span
        className={`rounded-tr border-t border-r border-[#9aa3b5] pr-2 text-[11px] leading-4 whitespace-nowrap text-black ${
          active ? "bg-[#fdfdfe]" : "bg-[#d3d9ea]"
        }`}
      >
        {label}
      </span>
    </button>
  );
}

function ViewTab({ children, active, plain }: { children: ReactNode; active?: boolean; plain?: boolean }) {
  const fill = active ? "#ffffff" : plain ? "#e0e3eb" : "#d0d8e9";
  return (
    <button type="button" className="flex h-[21px] items-stretch">
      <svg viewBox="0 0 8 21" className="h-[21px] w-2 shrink-0">
        <path d="M0 0h8v21L0 9z" fill={fill} />
        <path d="M.500 9L8 20.500" fill="none" stroke="#9aa3b5" />
      </svg>
      <span
        className={`rounded-br border-r border-b border-[#9aa3b5] pr-[7px] pl-1 text-[11px] leading-[22px] whitespace-nowrap ${
          active ? "bg-white" : plain ? "bg-[#e0e3eb]" : "bg-[#d0d8e9]"
        }`}
      >
        {children}
      </span>
    </button>
  );
}

function GearIcon() {
  return (
    <svg viewBox="0 0 16 16" className="h-4 w-4">
      <circle cx="8" cy="8" r="6" fill="none" stroke="#8b8f96" strokeWidth="2.200" strokeDasharray="2.600 2.110" />
      <circle cx="8" cy="8" r="5" fill="#e6e8ee" stroke="#8b8f96" />
      <circle cx="8" cy="8" r="1.500" fill="none" stroke="#8b8f96" />
    </svg>
  );
}

/* ---------- layers panel ---------- */

interface Layer {
  name: string;
  color: string;
  bulb?: "on" | "off";
  current?: boolean;
  selected?: boolean;
}

const layers: Layer[] = [
  { name: "Default", color: "#000000", bulb: "on" },
  { name: "Layer 01", color: "#d00000", bulb: "off", selected: true },
  { name: "Layer 02", color: "#7d26cd", current: true },
  { name: "Layer 03", color: "#0000ff", bulb: "on" },
  { name: "Layer 04", color: "#008000", bulb: "on" },
  { name: "Layer 05", color: "#ffffff", bulb: "off" },
];

function Bulb({ on, halo }: { on: boolean; halo?: boolean }) {
  const shape = "M3.500 10V8.500C2 7 1 6 1 4.500a4 4 0 0 1 8 0C9 6 8 7 6.500 8.500V10z";
  return (
    <svg viewBox="0 0 10 13" className="mx-auto h-[13px] w-2.5 overflow-visible">
      {halo && <path d={shape} fill="#fff" stroke="#fff" strokeWidth="3.500" />}
      <path d={shape} fill={on ? "#fdfba0" : "#3f9be8"} stroke={on ? "#8a8a20" : "#1e5c9c"} />
      <path d="M3.500 10.500h3M4 12h2" stroke="#333" />
    </svg>
  );
}

function Lock({ halo }: { halo?: boolean }) {
  return (
    <svg viewBox="0 0 13 13" className="mx-auto h-[13px] w-[13px] overflow-visible">
      {halo && <path d="M1.500 6.500h8v5h-8zM7.500 6V3c0-2.500 4-2.500 4 0v1" fill="#fff" stroke="#fff" strokeWidth="3.500" />}
      <path d="M1.500 6.500h8v5h-8z" fill="#fff" stroke="#000" strokeWidth="1.300" />
      <path d="M7.500 6V3c0-2.500 4-2.500 4 0v1" fill="none" stroke="#000" />
    </svg>
  );
}

function LayerTable() {
  return (
    <table className="w-full table-fixed border-collapse text-[11px] leading-4">
      <thead>
        <tr className="h-[25px] text-left">
          <th className="w-[79px] p-0 pl-1.5 font-normal">Name</th>
          <th className="w-[17px] border-l border-[#e8e8e8]" />
          <th className="w-[17px] border-l border-[#e8e8e8]" />
          <th className="w-[17px] border-l border-[#e8e8e8]" />
          <th className="w-[17px] border-x border-[#e8e8e8]" />
          <th className="p-0 pl-[3px] font-normal">Material</th>
        </tr>
      </thead>
      <tbody>
        {layers.map((layer) => (
          <tr
            key={layer.name}
            className={`h-[17px] border-b border-dotted ${
              layer.selected ? "border-white bg-[#3399ff] text-white" : "border-[#e4e4e4]"
            }`}
          >
            <td className={`p-0 pl-2 ${layer.current ? "font-bold" : ""}`}>{layer.name}</td>
            <td className="p-0">
              {layer.current && (
                <svg viewBox="0 0 11 10" className="mx-auto h-2.5 w-[11px]">
                  <path d="M1 5.500l3 3L10 1.500" fill="none" stroke="#000" strokeWidth="2" />
                </svg>
              )}
            </td>
            <td className="p-0">{layer.bulb && <Bulb on={layer.bulb === "on"} halo={layer.selected} />}</td>
            <td className="p-0">{layer.bulb && <Lock halo={layer.selected} />}</td>
            <td className="p-0">
              <span
                className={`mx-auto block h-3 w-3 border ${layer.selected ? "border-white" : "border-black"}`}
                style={{ backgroundColor: layer.color }}
              />
            </td>
            <td className="p-0 pl-[3px]">
              <span
                className={`block h-3 w-3 rounded-full border ${
                  layer.selected ? "border-white bg-white" : "border-[#ececec]"
                }`}
              />
            </td>
          </tr>
        ))}
      </tbody>
    </table>
  );
}

const panelTabs = [
  {
    label: "P...",
    icon: (
      <svg viewBox="0 0 15 15" className="h-[15px] w-[15px] shrink-0" fill="none" strokeWidth="3">
        <path d="M7.500 2a5.500 5.500 0 0 1 4.800 2.700" stroke="#f0c020" />
        <path d="M12.300 4.700a5.500 5.500 0 0 1-1 7" stroke="#40b040" />
        <path d="M11.300 11.700a5.500 5.500 0 0 1-5.800 1" stroke="#20a0d8" />
        <path d="M5.500 12.700A5.500 5.500 0 0 1 2 8" stroke="#5040d0" />
        <path d="M2 8a5.500 5.500 0 0 1 5.500-6" stroke="#e02060" />
        <circle cx="7.500" cy="7.500" r="7" stroke="#333" strokeWidth=".8" />
        <circle cx="7.500" cy="7.500" r="3.800" fill="#fff" />
      </svg>
    ),
  },
  {
    label: "L...",
    icon: (
      <svg viewBox="0 0 15 15" className="h-[15px] w-[15px] shrink-0" strokeLinejoin="round">
        <path d="M0 1l8 3 7-1-1 8-6 4-6-5z" fill="#1e2638" />
        <path d="M0 1l8 5v4L1 5z" fill="#c82010" />
        <path d="M0 1l7-1 8 3-7 3z" fill="#ff8a5a" />
        <path d="M8 6l7-3-1 4-6 3z" fill="#f04020" />
        <path d="M8 12l6-3-1 3-5 2z" fill="#f8d0b8" />
      </svg>
    ),
  },
  {
    label: "Di...",
    icon: (
      <svg viewBox="0 0 15 15" className="h-[15px] w-[15px] shrink-0">
        <rect x="1" y="1.500" width="13" height="9.500" fill="#8a9098" stroke="#111" strokeWidth="1.400" />
        <path d="M5 13.500h5" stroke="#222" strokeWidth="2" />
      </svg>
    ),
  },
  {
    label: "H...",
    icon: (
      <svg viewBox="0 0 15 15" className="h-[15px] w-[15px] shrink-0">
        <rect x=".500" y=".500" width="14" height="14" fill="#eef2fb" stroke="#4a68b8" />
        <rect x="1" y="1" width="13" height="3" fill="#5878c8" />
        <circle cx="7.500" cy="9.500" r="4.500" fill="#3a62d8" />
        <path d="M6 8.500c0-2 3-2 3 0 0 1-1.500 1-1.500 2M7.500 11.500v1" stroke="#fff" fill="none" strokeWidth="1.200" />
      </svg>
    ),
  },
];

const layerActions: { name: string; art: ReactNode }[] = [
  { name: "New layer", art: <path d="M3.500 1.500h6l3 3v9h-9z M9.500 1.500v3h3" fill="#fff" stroke="#333" /> },
  {
    name: "New sublayer",
    art: <path d="M2.500 1.500h5l2 2v7h-7zM6.500 5.500h5l2 2v7h-7z" fill="#fff" stroke="#222" strokeWidth="1.200" />,
  },
  { name: "Delete layer", art: <path d="M2 2l12 11M14 2L2 13" stroke="#3a3a3a" strokeWidth="2.400" /> },
  { name: "Move up", art: <path d="M1.500 10.500L8 4.500l6.500 6z" fill="#999" stroke="#333" /> },
  { name: "Move down", art: <path d="M1.500 4.500h13L8 10.500z" fill="#999" stroke="#333" /> },
  { name: "Move up one level", art: <path d="M11 1.500v12L4 7.500z" fill="#9a9a9a" stroke="#888" /> },
  { name: "Filter", art: <path d="M2 1.500h12L9.500 7v6.500l-3-1V7z" fill="#777" stroke="#333" /> },
  { name: "Columns", art: <path d="M3.500 1.500h9v12h-9zM3.500 5.500h9M3.500 9.500h9M8 4v9" fill="#ddd" stroke="#888" /> },
  {
    name: "Tools",
    art: (
      <g stroke="#222" fill="#777" strokeLinejoin="round">
        <path d="M2 14L9 5l2 2-7 8z" />
        <path d="M5 3l4-2 6 4-1 3-2-2-3 1-2-2z" />
      </g>
    ),
  },
];

function LayersPanel() {
  return (
    <aside className="mr-px ml-[7px] flex w-[192px] shrink-0 flex-col pt-[3px]">
      <div className="h-[3px] shrink-0 border-y border-[#b4bccb]" />
      <div className="mt-0.5 flex h-[21px] shrink-0">
        {panelTabs.map((tab, i) => (
          <button key={tab.label} type="button" className="flex w-[43px] items-stretch text-[11px]">
            <span
              className={`relative z-10 flex w-9 items-center gap-0.5 rounded-tl-md border-t border-l border-[#9aa3b5] pl-1 ${
                i === 1 ? "bg-white" : "bg-[#d3d9ea]"
              }`}
            >
              {tab.icon}
              <span className="whitespace-nowrap">{tab.label}</span>
            </span>
            <svg viewBox="0 0 7 21" className="h-[21px] w-[7px] shrink-0">
              <path d="M0 0l7 14v7H0z" fill={i === 1 ? "#fff" : "#d3d9ea"} />
              <path d="M0 .500L7 14" fill="none" stroke="#9aa3b5" />
            </svg>
          </button>
        ))}
        <button type="button" aria-label="Panel options" className="mt-1 ml-[3px]">
          <GearIcon />
        </button>
      </div>
      <div className="flex min-h-0 flex-1 flex-col border border-[#9aa3b5] bg-white">
        <div className="flex h-5 shrink-0 bg-[#f1f2f6]">
          {layerActions.map((action) => (
            <button key={action.name} type="button" aria-label={action.name} className="flex w-[21px] items-center justify-center">
              <svg viewBox="0 0 16 16" className="h-4 w-4">
                {action.art}
              </svg>
            </button>
          ))}
        </div>
        <div className="flex-1 overflow-hidden">
          <LayerTable />
        </div>
        <div className="flex h-4 shrink-0 items-stretch bg-[#f0f0f0]">
          <button type="button" aria-label="Scroll left" className="flex w-[17px] items-center justify-center">
            <svg viewBox="0 0 8 8" className="h-2 w-2">
              <path d="M6 0L2 4l4 4" fill="none" stroke="#505050" strokeWidth="2" />
            </svg>
          </button>
          <div className="mb-px w-[74px] bg-[#cdcdcd]" />
          <div className="flex-1" />
          <button type="button" aria-label="Scroll right" className="flex w-[17px] items-center justify-center">
            <svg viewBox="0 0 8 8" className="h-2 w-2">
              <path d="M2 0l4 4-4 4" fill="none" stroke="#505050" strokeWidth="2" />
            </svg>
          </button>
        </div>
      </div>
      <div className="h-[7px] shrink-0" />
    </aside>
  );
}

/* ---------- osnap and status ---------- */

const osnaps = [
  { name: "End", on: true },
  { name: "Near", on: true },
  { name: "Point", on: true },
  { name: "Mid", on: true },
  { name: "Cen", on: false },
  { name: "Int", on: true },
  { name: "Perp", on: true },
  { name: "Tan", on: true },
  { name: "Quad", on: true },
  { name: "Knot", on: true },
  { name: "Vertex", on: true },
  { name: "Project", on: false, disabled: true },
  { name: "Disable", on: false, disabled: true },
];

function Osnap({ name, on, disabled }: { name: string; on: boolean; disabled?: boolean }) {
  return (
    <label className="flex items-center gap-[5px] text-[11px]">
      <span className="relative flex h-3.5 w-3.5">
        <input
          type="checkbox"
          defaultChecked={on}
          disabled={disabled}
          className="peer h-3.5 w-3.5 appearance-none border border-[#333] bg-white disabled:border-[#b4b4b4] disabled:bg-[#dfdfdf]"
        />
        <svg viewBox="0 0 14 14" className="pointer-events-none absolute inset-0 hidden h-3.5 w-3.5 peer-checked:block">
          <path d="M3 7L6 10L11 4" fill="none" stroke="#333" strokeWidth="1.300" />
        </svg>
      </span>
      {name}
    </label>
  );
}

const coords = [
  { label: "CPlane", width: "w-14" },
  { label: "x 24.56", width: "w-[88px]" },
  { label: "y 134.28", width: "w-[88px]" },
  { label: "z 0.00", width: "w-[88px]" },
  { label: "Millimeters", width: "w-[88px]" },
];

const modes = ["Grid Snap", "Ortho", "Planar", "Osnap", "SmartTrack", "Gumball"];

const menus = [
  "File",
  "Edit",
  "View",
  "Curve",
  "Surface",
  "Solid",
  "Mesh",
  "Dimension",
  "Transform",
  "Tools",
  "Analyze",
  "Render",
  "Panels",
  "Paneling Tools",
  "Help",
];

export default function App() {
  const [activeTab, setActiveTab] = useState("Select");

  return (
    <div className={`flex h-screen overflow-hidden bg-[#e0e3eb] text-black ${SANS}`}>
      {/* the status bar runs off the bottom of the window */}
      <div className="flex h-[calc(100vh+10px)] min-w-0 flex-1 flex-col">
        <header className={`shrink-0 bg-white text-xs ${UI}`}>
          <div className="flex h-7 items-center pb-1 pl-2">
            <svg viewBox="0 0 16 16" className="mr-[5px] h-4 w-4">
              <rect width="16" height="16" fill="#222" />
              <path d="M1 1l4 4 3 1 6-4 1 1-3 5 1 3-4 4H5l1-3-5-3 1-3z" fill="#e8e8e8" />
              <path d="M4 6l4 2 4-2" stroke="#333" fill="none" />
            </svg>
            <h1 className="flex-1">GEARSYSTEM (99 KB) - Rhinoceros Corporate (32-bit) - [Perspective]</h1>
            <button type="button" aria-label="Minimize" className="flex w-[46px] justify-center">
              <svg viewBox="0 0 11 11" className="h-[11px] w-[11px]">
                <path d="M0 5.500h11" stroke="#000" />
              </svg>
            </button>
            <button type="button" aria-label="Maximize" className="flex w-[46px] justify-center">
              <svg viewBox="0 0 11 11" className="h-[11px] w-[11px]">
                <rect x=".500" y=".500" width="10" height="10" fill="none" stroke="#000" />
              </svg>
            </button>
            <button type="button" aria-label="Close" className="flex w-[46px] justify-center">
              <svg viewBox="0 0 11 11" className="h-[11px] w-[11px]">
                <path d="M.500 .500l10 10M10.500 .500l-10 10" stroke="#000" strokeWidth="1.100" />
              </svg>
            </button>
          </div>
          <nav className="flex h-[18px] items-center gap-[13px] border-b border-[#f0f0f0] pl-[7px]">
            {menus.map((menu) => (
              <button key={menu} type="button" className="whitespace-nowrap">
                {menu}
              </button>
            ))}
          </nav>
        </header>

        {/* command line */}
        <section className="flex shrink-0 border-b border-[#c3cbd8] pt-1 pb-[3px]">
          <div className="mr-px ml-[3px] w-[3px] border-x border-[#b4bccb]" />
          <div className="mr-px flex-1 text-xs">
            <div className="flex h-[29px] border-b border-[#9aa3b5] bg-white">
              <p className="flex-1 pl-px leading-4">Command: _Delete</p>
              <div className="flex w-[15px] flex-col items-center justify-around bg-[#f0f0f0]">
                <svg viewBox="0 0 8 6" className="h-1.5 w-2">
                  <path d="M0 5l4-4 4 4" fill="none" stroke="#505050" strokeWidth="2" />
                </svg>
                <svg viewBox="0 0 8 6" className="h-1.5 w-2">
                  <path d="M0 1l4 4 4-4" fill="none" stroke="#505050" strokeWidth="2" />
                </svg>
              </div>
            </div>
            <div className="flex h-[18px] items-start bg-white leading-4">
              <label htmlFor="command" className="pl-px font-bold">
                Command:
              </label>
              <span className="mt-px ml-0.5 h-3.5 w-px bg-black" />
              <input id="command" className="min-w-0 flex-1 outline-none" />
              <div className="flex w-[15px] flex-col items-center bg-[#f0f0f0]">
                <button type="button" aria-label="Previous command" className="flex h-[9px] w-3.5 items-center justify-center border border-[#b0b0b0]">
                  <svg viewBox="0 0 5 3" className="h-[3px] w-[5px]">
                    <path d="M0 3l2.500-3L5 3z" />
                  </svg>
                </button>
                <button type="button" aria-label="Next command" className="flex h-[9px] w-3.5 items-center justify-center border border-[#b0b0b0]">
                  <svg viewBox="0 0 5 3" className="h-[3px] w-[5px]">
                    <path d="M0 0h5L2.500 3z" />
                  </svg>
                </button>
              </div>
            </div>
          </div>
        </section>

        {/* tabbed toolbar */}
        <section className="flex h-[63px] shrink-0">
          <div className="mt-1 mr-px mb-1 ml-[3px] w-[3px] border-x border-[#b4bccb]" />
          <div className="flex min-w-0 flex-1 flex-col">
            <div className="mr-px flex h-[19px] shrink-0 items-end border-b border-[#9aa3b5] pl-px">
              {toolTabs.map((tab) => (
                <ToolTab key={tab} label={tab} active={tab === activeTab} onClick={() => setActiveTab(tab)} />
              ))}
              <button type="button" aria-label="Toolbar options" className="ml-auto">
                <GearIcon />
              </button>
            </div>
            <div className="mr-px flex flex-1 items-start bg-linear-to-b from-[#fcfcfd] to-[#e0e3eb] pt-0.5 pl-px">
              {selectTools.map((tool) => (
                <SelectTool key={tool.name} tool={tool} />
              ))}
              <div className="mr-1 ml-0.5 h-7 w-px bg-[#b8bcc4]" />
              {filterTools.map((tool) => (
                <SelectTool key={tool.name} tool={tool} />
              ))}
            </div>
          </div>
        </section>

        <main className="flex min-h-0 flex-1">
          <SideToolbar />
          <div className="flex min-w-0 flex-1 flex-col">
            <div className="relative min-h-0 flex-1 border border-[#9aa3b5]">
              <Scene />
              <div className="absolute top-0 left-0 flex h-[18px] items-center bg-[#8aa5c1] pl-[7px] text-xs text-[#101830]">
                Perspective
                <button type="button" aria-label="Viewport menu" className="ml-1.5 flex h-4 items-center border-l border-[#101830] pr-0.5">
                  <svg viewBox="0 0 9 5" className="h-[5px] w-[9px]">
                    <path d="M1 0h8L5 5z" />
                  </svg>
                </button>
              </div>
            </div>
            <div className="flex h-[26px] shrink-0 items-start">
              <ViewTab active>Perspective</ViewTab>
              <ViewTab>Top</ViewTab>
              <ViewTab>Front</ViewTab>
              <ViewTab>Right</ViewTab>
              <ViewTab plain>
                <svg viewBox="0 0 11 9" className="mt-[7px] h-[9px] w-[11px]" aria-label="New viewport">
                  <path d="M4.500 .500h2v3h3v2h-3v3h-2v-3h-3v-2h3z" fill="#fff" stroke="#555" />
                </svg>
              </ViewTab>
            </div>
          </div>
          <LayersPanel />
        </main>

        <section className="flex h-6 shrink-0 items-center">
          <div className="h-5 w-[3px] border-r border-[#b4bccb]" />
          <div className="ml-2 flex gap-[5px]">
            {osnaps.map((snap) => (
              <Osnap key={snap.name} {...snap} />
            ))}
          </div>
        </section>

        <footer className="flex h-[21px] shrink-0 border-t border-[#9aa3b5] text-xs leading-5 whitespace-nowrap">
          {coords.map((c) => (
            <div key={c.label} className={`${c.width} border-r border-[#9aa3b5] text-center`}>
              {c.label}
            </div>
          ))}
          <div className="flex w-[173px] items-center gap-0.5 border-r border-[#9aa3b5] pl-1">
            <span className="h-3.5 w-3.5 border border-black bg-[#7d26cd]" />
            Layer 02
          </div>
          {modes.map((mode) => (
            <button key={mode} type="button" className="border-r border-[#9aa3b5] bg-[#e2f2fc] pr-2 pl-[9px] font-bold">
              {mode}
            </button>
          ))}
          <button type="button" className="w-[109px] border-r border-[#9aa3b5]">
            Record History
          </button>
          <button type="button" className="w-[45px] border-r border-[#9aa3b5]">
            Filter
          </button>
          <div className="flex-1 pl-px">Absolute tolerance: 0.01</div>
          <div className="w-[27px] border-l border-[#9aa3b5]" />
        </footer>
      </div>

      {/* sliver of the window behind */}
      <div className="flex w-1 shrink-0 flex-col border-l border-[#8f8f8f] bg-[#d4d4d4]">
        <div className="h-[74px]" />
        <div className="h-6 border-y border-[#6aa8dc] bg-[#a6c4dc]" />
        <div className="h-[156px]" />
        <div className="h-6 border-y border-[#6aa8dc] bg-[#a6c4dc]" />
      </div>
    </div>
  );
}
